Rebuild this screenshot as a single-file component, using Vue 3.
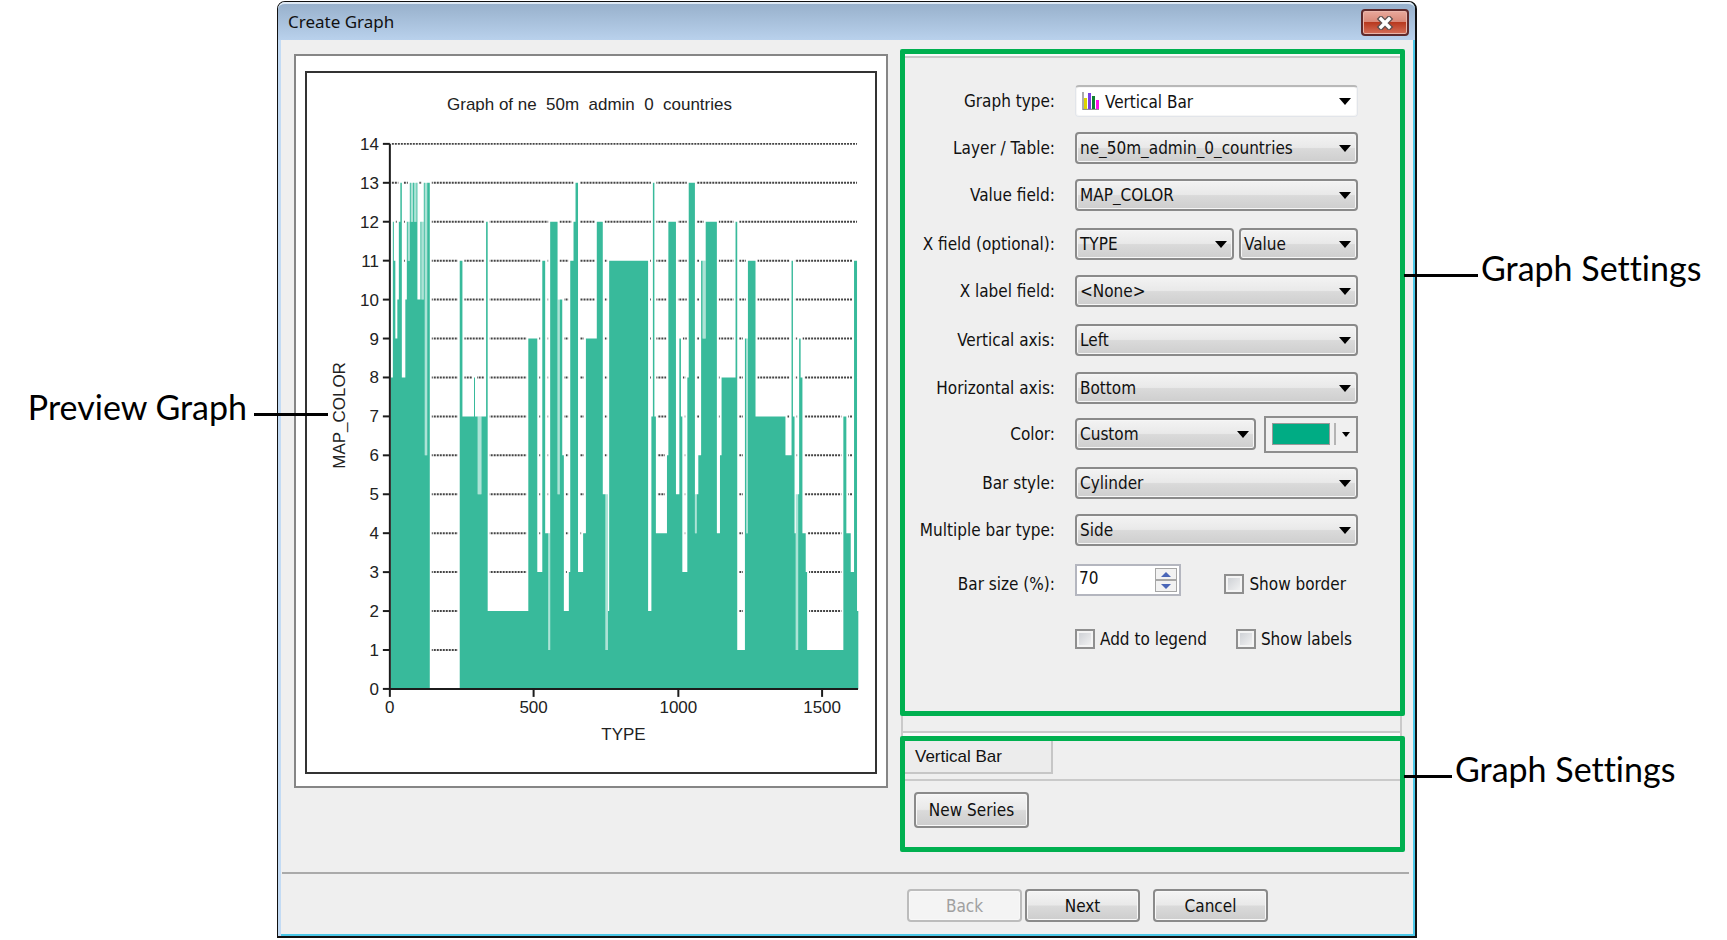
<template>
  <div class="page">
    <div class="notes notes-left">
      <div class="callout callout-preview">
        <span>Preview Graph</span>
        <i class="leader"></i>
      </div>
    </div>

    <section class="dialog">
      <header class="title-bar">
        <h1>Create Graph</h1>
        <button class="close-btn" type="button" aria-label="Close">
          <svg width="18" height="14" viewBox="0 0 18 14">
            <path d="M5 3 L13 11 M13 3 L5 11" stroke="#5b5050" stroke-width="6" stroke-linecap="square" />
            <path d="M5 3 L13 11 M13 3 L5 11" stroke="#fff" stroke-width="3.4" stroke-linecap="square" />
          </svg>
        </button>
      </header>

      <div class="body">
        <div class="preview">
          <svg class="chart" viewBox="307 73 569 700">
            <text x="590" y="110" class="chart-text" text-anchor="middle">Graph of ne_50m_admin_0_countries</text>
            <rect x="440" y="112" width="300" height="5" fill="#fff" />

            <line
              v-for="n in 14"
              :key="'grid' + n"
              x1="392"
              x2="858"
              :y1="yPos(n)"
              :y2="yPos(n)"
              class="grid-line"
            />

            <path :d="outline" fill="#fff" stroke="#fff" stroke-width="4" />
            <rect
              v-for="(s, i) in paleStrips"
              :key="'pale' + i"
              :x="s[0]"
              :width="s[1]"
              :y="yPos(s[3])"
              :height="yPos(s[2]) - yPos(s[3])"
              fill="#ace3d6"
            />
            <path :d="outline" fill="#38ba9b" />

            <path d="M390 144 V690 H859" class="axis" />
            <g v-for="n in 15" :key="'y' + n">
              <line x1="383" x2="390" :y1="yPos(n - 1)" :y2="yPos(n - 1)" class="axis" />
              <text x="379" :y="yPos(n - 1) + 6" class="chart-text" text-anchor="end">{{ n - 1 }}</text>
            </g>
            <g v-for="t in xTicks" :key="'x' + t.label">
              <line :x1="t.x" :x2="t.x" y1="690" y2="698" class="axis" />
              <text :x="t.x" y="714" class="chart-text" text-anchor="middle">{{ t.label }}</text>
            </g>

            <text x="624" y="741" class="chart-text" text-anchor="middle">TYPE</text>
            <text transform="translate(345 416) rotate(-90)" class="chart-text" text-anchor="middle">MAP_COLOR</text>
          </svg>
        </div>

        <div class="side">
          <form class="panel settings" @submit.prevent>
            <template v-for="f in fields" :key="f.id">
              <label :for="f.id">{{ f.label }}</label>
              <div class="controls">
                <div class="select" :class="{ plain: f.icon }">
                  <svg v-if="f.icon" class="type-icon" width="18" height="18" viewBox="0 0 18 18">
                    <path d="M1 0 V17.5 H17" fill="none" stroke="#909090" stroke-width="1.5" />
                    <rect x="2" y="6" width="3" height="11" fill="#dcd400" />
                    <rect x="6" y="1" width="3" height="16" fill="#7a3fe0" />
                    <rect x="10" y="4" width="3" height="13" fill="#108030" />
                    <rect x="14" y="8" width="3" height="9" fill="#ff10e8" />
                  </svg>
                  <select :id="f.id">
                    <option>{{ f.value }}</option>
                  </select>
                </div>
                <div v-if="f.id === 'x-field'" class="select x-mode">
                  <select aria-label="X field mode">
                    <option>Value</option>
                  </select>
                </div>
                <button v-if="f.id === 'color'" class="swatch" type="button" aria-label="Pick color">
                  <span class="swatch-fill"></span>
                  <span class="swatch-arrow"></span>
                </button>
              </div>
            </template>

            <label class="size-label" for="bar-size">Bar size (%):</label>
            <div class="controls spread size-controls">
              <div class="spinner">
                <input id="bar-size" v-model="barSize" type="text" />
                <div class="spin-btns">
                  <button type="button" aria-label="Increase" @click="barSize++"><i class="up"></i></button>
                  <button type="button" aria-label="Decrease" @click="barSize--"><i class="down"></i></button>
                </div>
              </div>
              <label class="check border-check"><input type="checkbox" />Show border</label>
            </div>

            <div class="controls spread last">
              <label class="check"><input type="checkbox" />Add to legend</label>
              <label class="check"><input type="checkbox" />Show labels</label>
            </div>
          </form>

          <div class="divider"></div>

          <div class="panel series">
            <div class="tabs">
              <button class="tab" type="button">Vertical Bar</button>
            </div>
            <button class="btn" type="button">New Series</button>
          </div>
        </div>
      </div>

      <footer class="footer">
        <button class="btn" type="button" disabled>Back</button>
        <button class="btn" type="button">Next</button>
        <button class="btn cancel" type="button">Cancel</button>
      </footer>
    </section>

    <div class="notes notes-right">
      <div class="callout callout-settings">
        <i class="leader"></i>
        <span>Graph Settings</span>
      </div>
      <div class="callout callout-series">
        <i class="leader"></i>
        <span>Graph Settings</span>
      </div>
    </div>
  </div>
</template>

<script setup>
import { ref, computed } from 'vue'

const barSize = ref(70)

const fields = [
  { id: 'graph-type', label: 'Graph type:', value: 'Vertical Bar', icon: true },
  { id: 'layer', label: 'Layer / Table:', value: 'ne_50m_admin_0_countries' },
  { id: 'value-field', label: 'Value field:', value: 'MAP_COLOR' },
  { id: 'x-field', label: 'X field (optional):', value: 'TYPE' },
  { id: 'x-label', label: 'X label field:', value: '<None>' },
  { id: 'v-axis', label: 'Vertical axis:', value: 'Left' },
  { id: 'h-axis', label: 'Horizontal axis:', value: 'Bottom' },
  { id: 'color', label: 'Color:', value: 'Custom' },
  { id: 'bar-style', label: 'Bar style:', value: 'Cylinder' },
  { id: 'bar-type', label: 'Multiple bar type:', value: 'Side' }
]

const xTicks = [
  { x: 390, label: '0' },
  { x: 534, label: '500' },
  { x: 679, label: '1000' },
  { x: 823, label: '1500' }
]

const yPos = (value) => 690 - value * 39

// [left edge, value], each step runs to the next one
const steps = [
  [391, 8], [393, 12], [394, 11], [395.5, 9], [397.5, 10], [399, 12], [400.5, 13], [402, 8],
  [405.5, 10], [407, 12], [408, 11], [410, 13], [411, 12], [413.3, 13], [414.3, 12], [416.7, 13],
  [417.6, 10], [420.6, 12], [421.6, 10], [424, 13], [425, 6], [427.4, 13], [430, 0],
  [460, 11], [462.7, 7], [474.3, 8], [475.3, 7], [478, 5], [481.7, 7], [486.4, 12], [488, 2],
  [528.7, 9], [537.7, 3], [542.7, 11], [545.6, 4], [548.7, 1], [550.6, 12], [558, 5], [560.3, 10],
  [562.7, 6], [564.3, 2], [569.3, 3], [570.7, 11], [574, 12], [576, 13], [578.5, 3], [583.6, 4],
  [586.4, 9], [597.3, 12], [603.3, 5], [606, 1], [608.5, 2], [609.7, 11], [648.7, 2], [652, 7],
  [653.5, 13], [655, 7], [656.5, 4], [667.6, 6], [669, 12], [676.6, 5], [680, 9], [681.6, 7],
  [683, 3], [688, 8], [689.4, 13], [695.6, 4], [697.4, 5], [699, 6], [701.8, 11], [703.3, 9],
  [706.4, 12], [717.6, 4], [720.7, 6], [722.3, 8], [736.3, 12], [738, 1], [745.7, 9], [747, 4],
  [748.7, 11], [756.3, 7], [786.3, 6], [792.4, 11], [793.8, 7], [795.4, 4], [796.6, 1], [799, 5],
  [800, 9], [801.5, 8], [803.3, 4], [806.6, 3], [808, 1], [844.3, 7], [847.3, 4], [851.7, 3],
  [855, 11], [858, 2], [859.3, 0]
]

// [x, width, from value, to value]
const paleStrips = [
  [408, 2, 11, 12], [411, 6, 12, 13], [421.5, 2.5, 10, 12], [425, 2.4, 6, 13],
  [478, 3.7, 5, 7], [548.7, 2, 1, 4], [558, 2.4, 5, 10], [606, 2.5, 1, 5], [703.3, 3.1, 9, 11],
  [747, 1.7, 4, 9], [796.6, 2.4, 1, 5], [695.6, 1.8, 4, 5]
]

const outline = computed(() => {
  let d = `M${steps[0][0]} 690`
  for (const [x, value] of steps) {
    d += ` H${x} V${yPos(value)}`
  }
  return d + ' Z'
})
</script>

<style>
body {
  margin: 0;
  background: #fff;
}
</style>

<style scoped>
* {
  box-sizing: border-box;
}

.page {
  display: grid;
  grid-template-columns: 277px minmax(0, 1fr) 310px;
  padding: 1px 0;
  font-family: 'DejaVu Sans Condensed', 'DejaVu Sans', sans-serif;
  font-size: 17px;
  color: #111;
}

button,
select,
input {
  font: inherit;
  color: inherit;
  margin: 0;
}

/* callouts beside the dialog */
.notes {
  position: relative;
  z-index: 1;
  font-family: Lato, sans-serif;
  font-size: 34px;
  font-variant-ligatures: none;
  line-height: 40px;
  color: #000;
  white-space: nowrap;
  pointer-events: none;
}

.notes-left {
  margin-right: -51px;
  padding-top: 386px;
}

.notes-right {
  margin-left: -13px;
  padding-top: 247px;
}

.callout {
  display: flex;
  align-items: center;
}

.callout-preview {
  justify-content: flex-end;
  gap: 7px;
}

.callout-settings,
.callout-series {
  gap: 3px;
}

.callout-series {
  margin-top: 461px;
}

.leader {
  width: 74px;
  height: 3px;
  margin-top: 14px;
  background: #000;
}

.callout-series .leader {
  width: 48px;
}

/* dialog */
.dialog {
  border: 1px solid #111;
  border-right-width: 2px;
  border-bottom-width: 2px;
  border-radius: 8px 8px 0 0;
  background: #efefef;
  box-shadow: inset 3px 0 #c3dbf4, inset -2px -2px #4cc8e8;
}

.title-bar {
  display: flex;
  justify-content: space-between;
  align-items: flex-start;
  height: 38px;
  padding: 5px 6px 0 10px;
  border-top: 2px solid #dfeaf5;
  border-radius: 7px 7px 0 0;
  background: linear-gradient(#98b1cc, #b9d1ec);
}

.title-bar h1 {
  margin: 0;
  font-family: 'Noto Sans', sans-serif;
  font-size: 17px;
  font-weight: 400;
  line-height: 26px;
}

.close-btn {
  display: flex;
  align-items: center;
  justify-content: center;
  width: 48px;
  height: 27px;
  padding: 0;
  border: 2px solid #5e2a2c;
  border-radius: 4px;
  background: linear-gradient(#e9a99c, #d88878 48%, #b8391f 50%, #d5705a);
  box-shadow: inset 0 0 0 1px #eab5aa;
}

.body {
  display: grid;
  grid-template-columns: minmax(0, 594fr) minmax(0, 505fr);
  gap: 12px;
  align-items: start;
  margin: 0 4px;
  padding: 9px 6px 20px 12px;
}

.preview {
  margin-top: 5px;
  padding: 15px 9px 12px;
  border: 2px solid #868686;
  background: #fff;
}

.chart {
  display: block;
  width: 100%;
  border: 2px solid #333;
}

.chart-text {
  font-family: 'Liberation Sans', Arial, sans-serif;
  font-size: 17px;
  fill: #222;
}

.grid-line {
  stroke: #444;
  stroke-width: 2;
  stroke-dasharray: 2 1;
}

.axis {
  fill: none;
  stroke: #1c1c1c;
  stroke-width: 2;
}

/* settings */
.panel {
  border: 5px solid #00b050;
  border-radius: 2px;
}

.settings {
  display: grid;
  grid-template-columns: minmax(0, 1fr) minmax(0, 283px);
  grid-template-rows: 47px 47px 49px 47px 49px 48px 46px 49px 47px 50px 59px 32px;
  column-gap: 20px;
  align-items: start;
  padding: 31px 42px 56px 0;
  box-shadow: inset 0 2px #fafafa, inset 0 4px #c9c9c9;
}

.settings > label {
  line-height: 32px;
  text-align: right;
  white-space: nowrap;
}

.settings > .size-label {
  line-height: 40px;
}

.controls {
  display: flex;
  align-items: center;
  gap: 5px;
  height: 32px;
}

.spread {
  justify-content: space-between;
}

.size-controls {
  height: 40px;
}

.last {
  grid-column: 2;
  padding-right: 6px;
}

.border-check {
  padding-right: 12px;
}

.select {
  position: relative;
  flex: 1;
  min-width: 0;
}

.select::after {
  content: '';
  position: absolute;
  top: 13px;
  right: 7px;
  border: 6px solid transparent;
  border-top: 7px solid #000;
  border-bottom: 0;
  pointer-events: none;
}

.select select {
  display: block;
  width: 100%;
  height: 32px;
  padding: 0 24px 0 0;
  appearance: none;
  border: 2px solid #8a8a8a;
  border-radius: 4px;
  background: linear-gradient(#f3f3f3, #e9e9e9 48%, #dadada 52%, #cecece);
  box-shadow: inset 0 0 0 1px #f6f6f6;
  text-indent: 3px;
}

.plain select {
  padding-left: 26px;
  border: 1px solid #e2e5ea;
  border-top: 2px solid #b8b8b8;
  background: #fff;
}

.type-icon {
  position: absolute;
  top: 7px;
  left: 7px;
  pointer-events: none;
}

.x-mode {
  flex: 0 0 119px;
}

.swatch {
  display: flex;
  align-items: center;
  justify-content: space-between;
  width: 94px;
  height: 37px;
  margin-left: 3px;
  padding: 0 6px;
  border: 2px solid #8e8e8e;
  background: #f0f0f0;
}

.swatch-fill {
  width: 58px;
  height: 22px;
  border: 1px solid #999;
  background: #00ac84;
}

.swatch-arrow {
  display: flex;
  align-items: center;
  justify-content: flex-end;
  width: 16px;
  height: 22px;
  border-left: 2px solid #b4b4b4;
}

.swatch-arrow::after {
  content: '';
  border: 4px solid transparent;
  border-top: 5px solid #000;
  border-bottom: 0;
}

.spinner {
  display: flex;
  align-self: flex-start;
  width: 106px;
  height: 32px;
  padding: 2px;
  border: 2px solid #b4b6bf;
  background: #fff;
}

.spinner input {
  flex: 1;
  min-width: 0;
  padding: 0 0 4px;
  border: 0;
  outline: 0;
  background: none;
}

.spin-btns {
  display: flex;
  flex-direction: column;
  width: 22px;
}

.spin-btns button {
  display: flex;
  flex: 1;
  align-items: center;
  justify-content: center;
  padding: 0;
  border: 1px solid #a6a6a6;
  background: #f2f2f2;
}

.up,
.down {
  border: 5px solid transparent;
}

.up {
  border-top: 0;
  border-bottom: 5px solid #4a66b8;
}

.down {
  border-bottom: 0;
  border-top: 5px solid #4a66b8;
}

.check {
  display: flex;
  align-items: center;
  gap: 5px;
  white-space: nowrap;
}

.check input {
  width: 20px;
  height: 20px;
  appearance: none;
  border: 2px solid #8f8f8f;
  background: linear-gradient(135deg, #c9ccd1, #f6f6f6);
  box-shadow: inset 0 0 0 2px #f4f4f4;
}

.divider {
  height: 20px;
  margin: 0 3px 0 1px;
  border: 2px solid #cacaca;
  border-top: 0;
  border-bottom: 0;
  background: linear-gradient(#efefef 15px, #c9c9c9 15px, #c9c9c9 17px, #fafafa 17px);
}

.series {
  padding-bottom: 19px;
}

.tabs {
  height: 40px;
  border-bottom: 2px solid #cacaca;
}

.tab {
  display: block;
  width: 148px;
  height: 33px;
  padding: 0 0 0 10px;
  border: 0;
  border-right: 2px solid #c6c6c6;
  border-bottom: 2px solid #c6c6c6;
  background: #ececec;
  font-family: 'Liberation Sans', Arial, sans-serif;
  text-align: left;
}

.btn {
  width: 115px;
  height: 33px;
  padding: 0;
  border: 2px solid #8a8a8a;
  border-radius: 4px;
  background: linear-gradient(#f4f4f4, #e9e9e9 48%, #dadada 52%, #cdcdcd);
  box-shadow: inset 0 0 0 1px #f8f8f8;
}

.btn:disabled {
  border-color: #bcbcbc;
  background: #f4f4f4;
  color: #a0a0a0;
}

.series .btn {
  display: block;
  height: 36px;
  margin: 11px 0 0 9px;
}

.footer {
  display: flex;
  justify-content: flex-end;
  gap: 3px;
  margin: 0 6px 0 4px;
  padding: 15px 141px 14px 0;
  border-top: 2px solid #aaa;
}

.cancel {
  margin-left: 10px;
}
</style>
